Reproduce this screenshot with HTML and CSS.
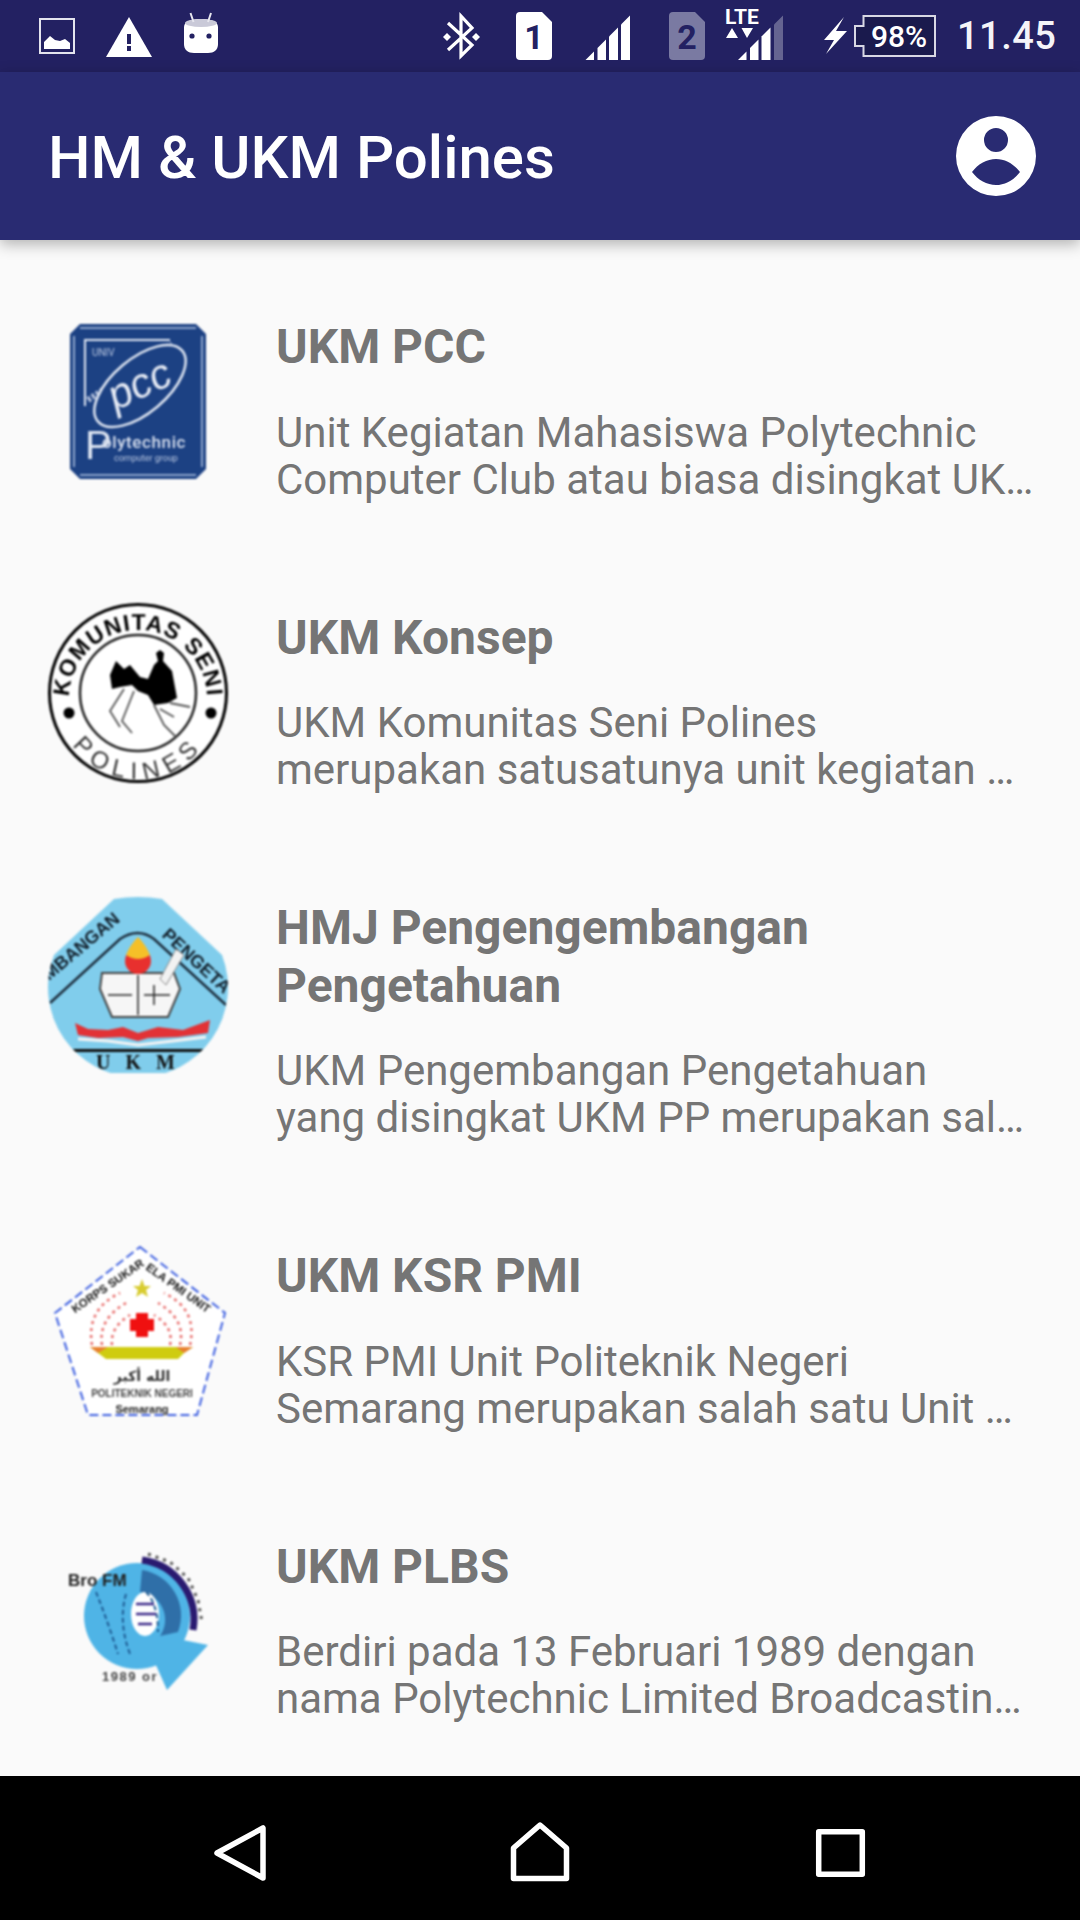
FILE: index.html
```html
<!DOCTYPE html>
<html lang="id">
<head>
<meta charset="utf-8">
<title>HM &amp; UKM Polines</title>
<link rel="stylesheet" href="styles.css">
</head>
<body>
<div class="phone">
  <div class="statusbar">
    <svg class="st-left" viewBox="39 0 180 72" width="180" height="72">
      <rect x="40" y="19" width="34" height="34" fill="none" stroke="#e4e4ee" stroke-width="2"/>
      <path d="M44 49V42L50 36L55 40L60 41L65 39L70 43V49Z" fill="#fff"/>
      <path d="M129 17L152 57H106Z" fill="#fff"/>
      <rect x="127" y="34" width="4" height="10" fill="#232162"/>
      <rect x="127" y="46" width="4" height="5" fill="#232162"/>
      <path d="M184 27C184 21 192 19 201 19C210 19 218 21 218 27V44C218 50 214 53 208 53H194C188 53 184 50 184 44Z" fill="#fff"/>
      <ellipse cx="201" cy="23" rx="16" ry="4" fill="#c9c9d8"/>
      <circle cx="192" cy="36" r="2.6" fill="#232162"/>
      <circle cx="209" cy="36" r="2.6" fill="#232162"/>
      <path d="M190.500 13L193.500 22M211 13L208 22" stroke="#e6e6ee" stroke-width="2" fill="none"/>
    </svg>
    <svg class="st-right" viewBox="442 0 494 72" width="494" height="72">
      <path d="M448 23L472 45L461 56V16L472 28L448 50" fill="none" stroke="#fff" stroke-width="3.2"/>
      <path d="M447 33L451 37L447 41L443 37ZM476 33L480 37L476 41L472 37Z" fill="#fff"/>
      <path d="M520 12H542L552 22V56A4 4 0 0 1 548 60H520A4 4 0 0 1 516 56V16A4 4 0 0 1 520 12Z" fill="#fff"/>
      <text class="sim-num" x="534" y="49" fill="#232162">1</text>
      <g fill="#fff">
        <polygon points="585.5,60 594,51.5 594,60"/>
        <polygon points="597.5,60 597.5,48 606,39.5 606,60"/>
        <polygon points="609,60 609,36.5 618,27.5 618,60"/>
        <polygon points="621,60 621,24.5 630,15.5 630,60"/>
      </g>
      <path d="M673 12H695L705 22V56A4 4 0 0 1 701 60H673A4 4 0 0 1 669 56V16A4 4 0 0 1 673 12Z" fill="#7a7aa2"/>
      <text class="sim-num" x="687" y="49" fill="#232162">2</text>
      <text class="lte" x="725" y="24" fill="#fff">LTE</text>
      <path d="M726 38L732 28L738 38ZM741.500 28H753L747 38Z" fill="#fff"/>
      <g fill="#fff">
        <polygon points="738,60 746.5,51.5 746.5,60"/>
        <polygon points="750,60 750,48 758.5,39.5 758.5,60"/>
        <polygon points="761.5,60 761.5,36.5 770.5,27.5 770.5,60"/>
        <polygon points="774,60 774,24.5 783,15.5 783,60" opacity=".3"/>
      </g>
      <path d="M844 17L824 40H834L826 54L847 31H836Z" fill="#fff"/>
      <path d="M863.500 16H935V56H863.500V46H855V26H863.500Z" fill="#1a1a4d" stroke="#d8d8e4" stroke-width="2"/>
      <text class="batt" x="871" y="47" fill="#fff">98%</text>
    </svg>
    <span class="clock">11.45</span>
  </div>

  <header class="appbar">
    <h1 class="appbar-title">HM &amp; UKM Polines</h1>
    <svg class="avatar" viewBox="0 0 80 80" width="80" height="80">
      <path fill="#fff" fill-rule="evenodd" d="M40 0A40 40 0 1 1 40 80A40 40 0 1 1 40 0ZM40 12A12 12 0 1 0 40 36A12 12 0 1 0 40 12ZM16 56C22 64 31 69 40 69C49 69 58 64 64 56C58 48 49 43 40 43C31 43 22 48 16 56Z"/>
    </svg>
  </header>

  <main class="list">
    <article class="item">
      <svg class="logo" viewBox="0 0 180 180" width="180" height="180">
        <path d="M32 12H148L158 22V157L148 167H32L22 157V22Z" fill="#1c4183"/>
        <path d="M26 24V155M32 16H148M32 163H148M154 24V155" stroke="#8fa6cc" stroke-width="2" fill="none"/>
        <path d="M37 94V28H122" stroke="#dfe6f2" stroke-width="2" fill="none"/>
        <path d="M40 88L124 32" stroke="#aebcd8" stroke-width="6" stroke-dasharray="3 2" fill="none"/>
        <ellipse cx="92" cy="74" rx="55" ry="27" transform="rotate(-40 92 74)" fill="#1c4183" stroke="#dfe6f2" stroke-width="2.5"/>
        <text class="l1-pcc" x="92" y="86" transform="rotate(-25 92 74)">pcc</text>
        <text class="l1-univ" x="44" y="44">UNIV</text>
        <text class="l1-p" x="37" y="147">P</text>
        <text class="l1-poly" x="54" y="136">olytechnic</text>
        <text class="l1-sub" x="66" y="149">computer group</text>
      </svg>
      <div class="info">
        <h2 class="name">UKM PCC</h2>
        <p class="desc"><span class="line">Unit Kegiatan Mahasiswa Polytechnic</span><span class="line">Computer Club atau biasa disingkat UK…</span></p>
      </div>
    </article>

    <article class="item">
      <svg class="logo" viewBox="0 0 180 180" width="180" height="180">
        <defs>
          <path id="arcTop" d="M21 96A69 69 0 0 1 159 96"/>
          <path id="arcBot" d="M10 96A80 80 0 0 0 170 96"/>
        </defs>
        <circle cx="90" cy="90" r="88.5" fill="#fff" stroke="#000" stroke-width="3"/>
        <circle cx="90" cy="90" r="58" fill="none" stroke="#222" stroke-width="2.500"/>
        <text class="l2-top"><textPath href="#arcTop" startOffset="50%">KOMUNITAS SENI</textPath></text>
        <text class="l2-bot"><textPath href="#arcBot" startOffset="50%">POLINES</textPath></text>
        <circle cx="21" cy="110" r="5.500" fill="#000"/>
        <circle cx="163" cy="110" r="5.500" fill="#000"/>
        <path d="M62 72L68 58L76 66L82 62L92 74L100 76L106 62L110 58L108 50L112 47L116 50L115 58L124 68L129 95L120 100L106 102L100 92L90 88L84 82L72 84L64 86Z" fill="#000"/>
        <path d="M76 86L62 108L72 124M86 88L74 118L84 130M106 102L116 122L128 134M122 100L142 104M112 106L126 114" stroke="#555" stroke-width="1.800" fill="none"/>
      </svg>
      <div class="info">
        <h2 class="name">UKM Konsep</h2>
        <p class="desc"><span class="line">UKM Komunitas Seni Polines</span><span class="line">merupakan satusatunya unit kegiatan …</span></p>
      </div>
    </article>

    <article class="item">
      <svg class="logo" viewBox="0 0 180 180" width="180" height="180">
        <defs>
          <clipPath id="clip3"><path d="M66 6Q90 2 114 6L174 62A90 90 0 1 1 6 62Z"/></clipPath>
        </defs>
        <g clip-path="url(#clip3)">
          <rect width="180" height="180" fill="#80cdec"/>
          <path d="M2 110L72 46Q90 34 106 46L178 112" fill="none" stroke="#1e3040" stroke-width="2.500"/>
          <text class="l3-arc" transform="translate(1 88) rotate(-40)">MBANGAN</text>
          <text class="l3-arc" transform="translate(113 43) rotate(43)">PENGETA</text>
          <path d="M54 80H126L132 96L120 124H64L52 96Z" fill="#f6f6f6" stroke="#444" stroke-width="2"/>
          <path d="M90 82V122M60 102H84M96 102H122M106 92V112" stroke="#222" stroke-width="1.500"/>
          <circle cx="90" cy="68" r="13" fill="#e8302e"/>
          <path d="M78 62Q82 52 90 44Q98 52 102 62Q90 70 78 62Z" fill="#f5c028"/>
          <path d="M112 86L128 56L136 62L118 92Z" fill="#f2f2f2" stroke="#888"/>
          <path d="M27 130L40 136L60 137L75 134L90 140L110 134L135 137L162 127L160 140L130 144L100 145L90 148L75 144L50 145L30 142Z" fill="#e23236"/>
          <path d="M30 146L60 148L90 152L125 148L158 144" stroke="#f4f4f4" stroke-width="3" fill="none"/>
          <rect x="20" y="156" width="140" height="3" fill="#111"/>
          <text class="l3-ukm" x="90" y="176">U K M</text>
        </g>
      </svg>
      <div class="info">
        <h2 class="name">HMJ Pengengembangan Pengetahuan</h2>
        <p class="desc"><span class="line">UKM Pengembangan Pengetahuan</span><span class="line">yang disingkat UKM PP merupakan sal…</span></p>
      </div>
    </article>

    <article class="item">
      <svg class="logo" viewBox="0 0 180 180" width="180" height="180">
        <defs><path id="arc4" d="M19 78L94 26L167 78"/></defs>
        <path d="M92 6L177 72L149 174H40L7 72Z" fill="#fff" stroke="#3d5fe0" stroke-width="2" stroke-dasharray="9 4"/>
        <text class="l4-arc"><textPath href="#arc4" startOffset="50%">KORPS SUKARELA PMI UNIT</textPath></text>
        <path d="M94 38L96.500 45H103L98 49L100 56L94 52L88 56L90 49L85 45H91.500Z" fill="#d8cc30"/>
        <path d="M44 104Q38 68 72 52M142 104Q150 68 116 52M54 104Q50 78 78 62M132 104Q138 78 110 62M64 104Q62 86 82 74M122 104Q126 86 106 74" fill="none" stroke="#e86a68" stroke-width="2.500" stroke-dasharray="3 4"/>
        <path d="M88 72H100V78H106V90H100V96H88V90H82V78H88Z" fill="#f01010"/>
        <path d="M42 106H145L136 112L130 118H58L50 112Z" fill="#cfcc10"/>
        <path d="M42 106H60L50 112ZM145 106H128L136 112Z" fill="#e88030"/>
        <text class="l4-t" x="94" y="140">الله أكبر</text>
        <text class="l4-s" x="94" y="156">POLITEKNIK NEGERI</text>
        <text class="l4-b" x="94" y="172">Semarang</text>
      </svg>
      <div class="info">
        <h2 class="name">UKM KSR PMI</h2>
        <p class="desc"><span class="line">KSR PMI Unit Politeknik Negeri</span><span class="line">Semarang merupakan salah satu Unit …</span></p>
      </div>
    </article>

    <article class="item">
      <svg class="logo" viewBox="0 0 180 180" width="180" height="180">
        <circle cx="89" cy="84" r="53" fill="#4fb4e6"/>
        <path d="M94 38A46 46 0 0 1 130 100L112 104A28 28 0 0 0 92 60Z" fill="#2f6fa8"/>
        <path d="M94 28A60 60 0 0 1 145 98" fill="none" stroke="#2a1a70" stroke-width="7"/>
        <path d="M160 113L119 158L107 131L125 106Z" fill="#4fb4e6"/>
        <ellipse cx="97" cy="82" rx="14" ry="22" fill="#fff"/>
        <path d="M78 62Q70 90 82 122M98 60Q110 72 110 100M48 60Q60 90 70 122" fill="none" stroke="#1f5c94" stroke-width="2" stroke-dasharray="5 3"/>
        <path d="M88 72H106M88 82H108M90 92H104" stroke="#3c2a8a" stroke-width="2.500"/>
        <text class="l5-bro" x="20" y="54">Bro FM</text>
        <text class="l5-yr" x="54" y="149">1989 or</text>
        <path d="M100 22L122 30L140 46L150 68L154 90" fill="none" stroke="#555" stroke-width="3" stroke-dasharray="3 5"/>
      </svg>
      <div class="info">
        <h2 class="name">UKM PLBS</h2>
        <p class="desc"><span class="line">Berdiri pada 13 Februari 1989 dengan</span><span class="line">nama Polytechnic Limited Broadcastin…</span></p>
      </div>
    </article>
  </main>

  <nav class="navbar">
    <svg viewBox="0 0 72 72" width="72" height="72"><path d="M13 38L59 13V63Z" fill="none" stroke="#fff" stroke-width="5.500" stroke-linejoin="round"/></svg>
    <svg viewBox="0 0 72 72" width="72" height="72"><path d="M36 10L9.500 33V63.500H62.500V33Z" fill="none" stroke="#fff" stroke-width="5.500" stroke-linejoin="round"/></svg>
    <svg viewBox="0 0 72 72" width="72" height="72"><rect x="14.700" y="16.700" width="43.600" height="42.600" fill="none" stroke="#fff" stroke-width="5.500" stroke-linejoin="round"/></svg>
  </nav>
</div>
</body>
</html>
```

FILE: styles.css
```css
* { box-sizing: border-box; }
html, body { margin: 0; padding: 0; }
body { font-family: Roboto, "Liberation Sans", sans-serif; background: #fafafa; }

.phone {
  width: 1080px;
  height: 1920px;
  display: flex;
  flex-direction: column;
  overflow: hidden;
  background: #fafafa;
}

.statusbar {
  flex: 0 0 72px;
  height: 72px;
  display: flex;
  align-items: center;
  padding-left: 39px;
  background: #232162;
  color: #fff;
}
.statusbar svg { display: block; }
.st-right { margin-left: auto; }
.clock {
  width: 144px;
  padding-left: 21px;
  font-size: 38px;
  font-weight: 500;
  letter-spacing: .5px;
  color: #f4f4f8;
  white-space: nowrap;
}
.sim-num { font-size: 34px; font-weight: 700; text-anchor: middle; }
.lte { font-size: 21px; font-weight: 700; }
.batt { font-size: 30px; font-weight: 500; }

.appbar {
  flex: 0 0 168px;
  display: flex;
  align-items: center;
  justify-content: space-between;
  padding: 0 44px 0 48px;
  background: #292b72;
  box-shadow: 0 4px 14px rgba(0, 0, 0, .3);
  position: relative;
  z-index: 1;
}
.appbar-title {
  margin: 4px 0 0;
  font-size: 60px;
  font-weight: 500;
  line-height: 72px;
  color: #fff;
}
.avatar { display: block; }

.list {
  flex: 1 1 auto;
  min-height: 0;
  overflow: hidden;
  padding: 72px 48px 0;
  display: flex;
  flex-direction: column;
  gap: 100px;
}
.item {
  flex: none;
  display: flex;
  align-items: flex-start;
  gap: 48px;
}
.logo {
  flex: none;
  display: block;
  filter: blur(1px);
}
.info { flex: 1 1 auto; min-width: 0; padding-top: 6px; }
.name {
  margin: 0 0 33px;
  font-size: 48px;
  line-height: 57.500px;
  font-weight: 700;
  color: #757575;
}
.desc {
  margin: 0;
  font-size: 42px;
  line-height: 47px;
  font-weight: 400;
  color: #757575;
}
.line { display: block; white-space: nowrap; }

.navbar {
  flex: 0 0 144px;
  display: grid;
  grid-template-columns: repeat(3, 1fr);
  justify-items: center;
  align-items: center;
  padding: 6px 90px 0;
  background: #000;
}
.navbar svg { display: block; }

/* logo lettering */
.l1-pcc { font: italic 500 42px "Liberation Sans", sans-serif; fill: #e6ebf5; text-anchor: middle; }
.l1-univ { font: 10px Roboto, sans-serif; fill: #b8c6e0; }
.l1-p { font: 40px "Liberation Sans", sans-serif; fill: #dfe6f2; }
.l1-poly { font: 500 17px Roboto, sans-serif; fill: #d8e0ef; letter-spacing: .6px; }
.l1-sub { font: 9px Roboto, sans-serif; fill: #b8c6e0; }
.l2-top { font: 700 23px "Liberation Sans", sans-serif; fill: #000; text-anchor: middle; letter-spacing: 1px; }
.l2-bot { font: 400 24px "Liberation Sans", sans-serif; fill: #333; text-anchor: middle; letter-spacing: 7px; }
.l3-arc { font: 700 18px "Liberation Sans", sans-serif; fill: #14222e; }
.l3-ukm { font: 700 20px "Liberation Serif", serif; fill: #111; text-anchor: middle; letter-spacing: 5px; }
.l4-arc { font: 700 11.500px "Liberation Sans", sans-serif; fill: #111; text-anchor: middle; }
.l4-t { font: 700 14px "DejaVu Sans", sans-serif; fill: #333; text-anchor: middle; }
.l4-s { font: 700 10px "Liberation Sans", sans-serif; fill: #444; text-anchor: middle; }
.l4-b { font: 700 11px "Liberation Sans", sans-serif; fill: #222; text-anchor: middle; }
.l5-bro { font: 700 17px "Liberation Sans", sans-serif; fill: #222; }
.l5-yr { font: 700 13px "Liberation Sans", sans-serif; fill: #444; letter-spacing: 1.500px; }
```
